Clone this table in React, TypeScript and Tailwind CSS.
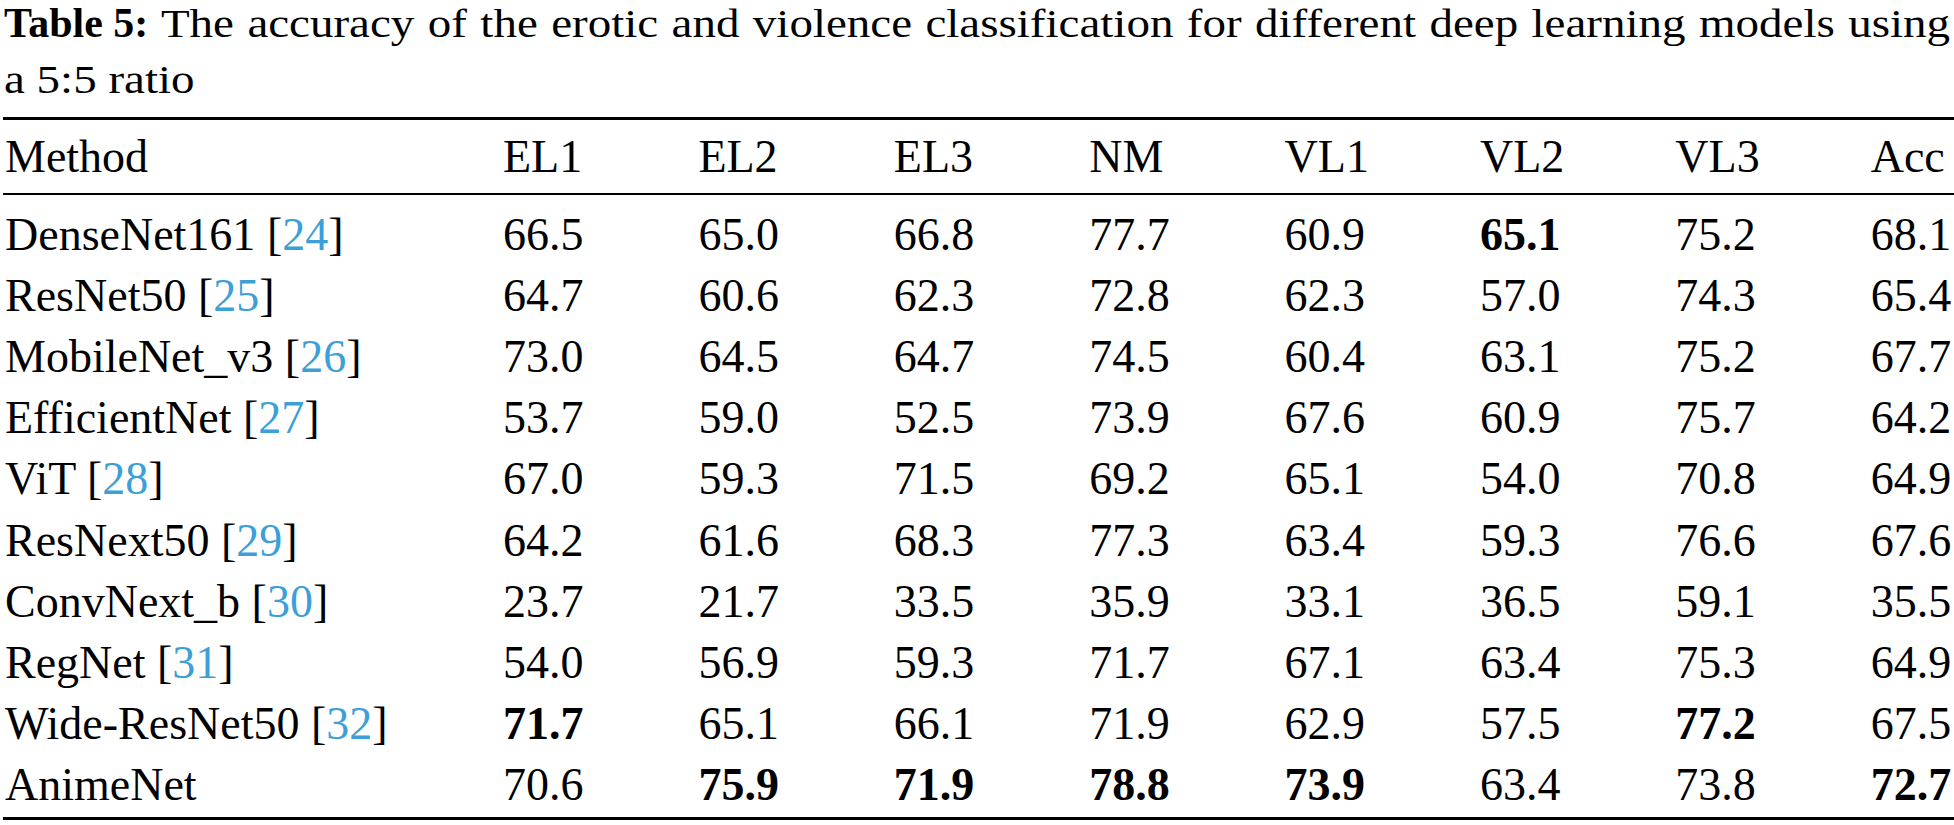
import React from "react";

type Cell = { v: string; b?: boolean };
type Row = { name: string; ref?: string; cells: Cell[] };

const c = (v: string, b = false): Cell => ({ v, b });

const rows: Row[] = [
  { name: "DenseNet161", ref: "24", cells: [c("66.5"), c("65.0"), c("66.8"), c("77.7"), c("60.9"), c("65.1", true), c("75.2"), c("68.1")] },
  { name: "ResNet50", ref: "25", cells: [c("64.7"), c("60.6"), c("62.3"), c("72.8"), c("62.3"), c("57.0"), c("74.3"), c("65.4")] },
  { name: "MobileNet_v3", ref: "26", cells: [c("73.0"), c("64.5"), c("64.7"), c("74.5"), c("60.4"), c("63.1"), c("75.2"), c("67.7")] },
  { name: "EfficientNet", ref: "27", cells: [c("53.7"), c("59.0"), c("52.5"), c("73.9"), c("67.6"), c("60.9"), c("75.7"), c("64.2")] },
  { name: "ViT", ref: "28", cells: [c("67.0"), c("59.3"), c("71.5"), c("69.2"), c("65.1"), c("54.0"), c("70.8"), c("64.9")] },
  { name: "ResNext50", ref: "29", cells: [c("64.2"), c("61.6"), c("68.3"), c("77.3"), c("63.4"), c("59.3"), c("76.6"), c("67.6")] },
  { name: "ConvNext_b", ref: "30", cells: [c("23.7"), c("21.7"), c("33.5"), c("35.9"), c("33.1"), c("36.5"), c("59.1"), c("35.5")] },
  { name: "RegNet", ref: "31", cells: [c("54.0"), c("56.9"), c("59.3"), c("71.7"), c("67.1"), c("63.4"), c("75.3"), c("64.9")] },
  { name: "Wide-ResNet50", ref: "32", cells: [c("71.7", true), c("65.1"), c("66.1"), c("71.9"), c("62.9"), c("57.5"), c("77.2", true), c("67.5")] },
  { name: "AnimeNet", cells: [c("70.6"), c("75.9", true), c("71.9", true), c("78.8", true), c("73.9", true), c("63.4"), c("73.8"), c("72.7", true)] },
];

const headers = ["EL1", "EL2", "EL3", "NM", "VL1", "VL2", "VL3", "Acc"];

const gridCls =
  "grid grid-cols-[498px_repeat(7,195.4px)_1fr] h-[61.1px] leading-[61.1px] pl-[5px] whitespace-nowrap";

export default function App() {
  return (
    <div className="flex flex-col w-[1954px] h-[825px] overflow-hidden bg-white text-black [font-family:'Liberation_Serif','Times_New_Roman',serif]">
      {/* Caption */}
      <div className="flex flex-col h-[103px] shrink-0">
        <div className="mt-[-4px] pl-[4px] pr-[4px] text-[47px] leading-[62px] scale-y-[0.87] origin-top">
          <div className="whitespace-nowrap text-justify [text-align-last:justify]">
            <span className="inline-block font-bold text-[42px] scale-y-[1.15] origin-[0_76%]">Table 5:</span> The
            accuracy of the erotic and violence classification for different deep learning models using
          </div>
          <div>a 5:5 ratio</div>
        </div>
      </div>

      {/* Top rule */}
      <div className="mt-[14px] ml-[3px] h-[3px] shrink-0 bg-black" />

      {/* Header */}
      <div className="mt-[6px] text-[46px]">
        <div className={gridCls}>
          <div>Method</div>
          {headers.map((h) => (
            <div key={h}>{h}</div>
          ))}
        </div>
      </div>

      {/* Mid rule */}
      <div className="mt-[6px] ml-[3px] h-[2px] shrink-0 bg-black" />

      {/* Body */}
      <div className="mt-[9px] text-[46px]">
        {rows.map((r) => (
          <div key={r.name} className={gridCls}>
            <div>
              {r.name}
              {r.ref && (
                <>
                  {" "}[<span className="text-[#3c9fd8]">{r.ref}</span>]
                </>
              )}
            </div>
            {r.cells.map((cell, i) => (
              <div key={i} className={cell.b ? "font-bold" : ""}>
                {cell.v}
              </div>
            ))}
          </div>
        ))}
      </div>

      {/* Bottom rule */}
      <div className="mt-[2px] ml-[3px] h-[3px] shrink-0 bg-black" />
    </div>
  );
}
